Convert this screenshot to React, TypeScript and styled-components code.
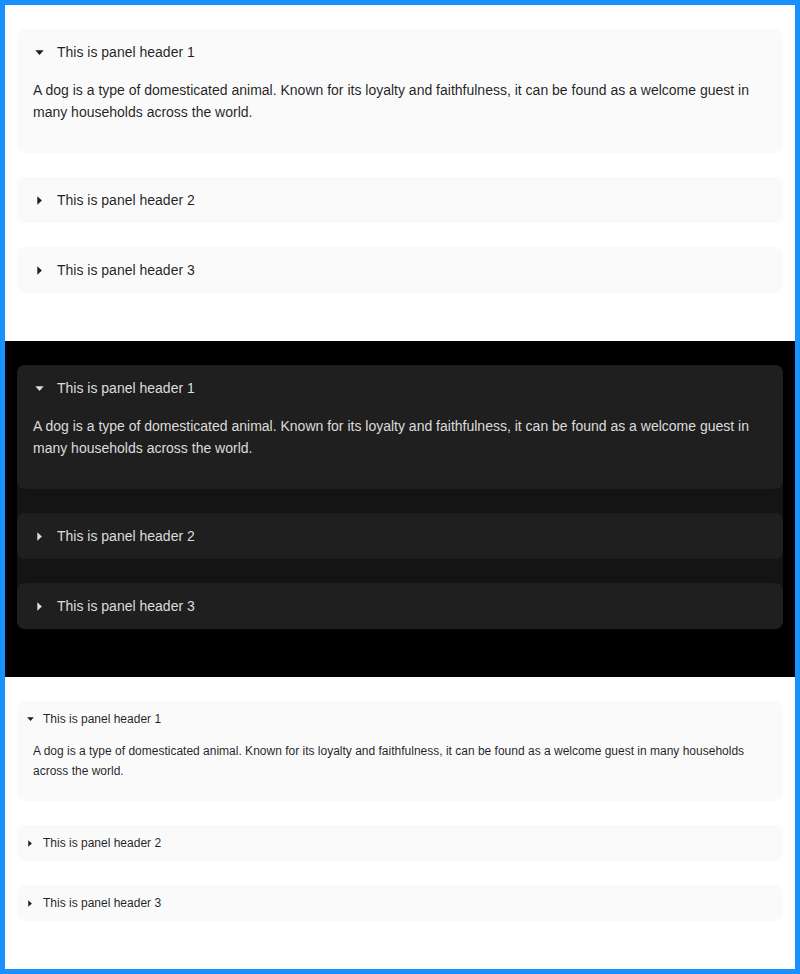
import React, { useState } from "react";
import styled, { createGlobalStyle } from "styled-components";

const Global = createGlobalStyle`
  html, body { margin: 0; padding: 0; background: #fff; }
  body { font-family: "Liberation Sans", Arial, sans-serif; }
  * { box-sizing: border-box; }
`;

type Mode = "light" | "dark";
type Size = "middle" | "small";

const Frame = styled.div`
  border: 5px solid #1890ff;
  min-height: 974px;
  background: #fff;
`;

const Section = styled.div<{ $mode: Mode }>`
  background: ${(p) => (p.$mode === "dark" ? "#000" : "#fff")};
  padding: 24px 12px 48px;
`;

const Collapse = styled.div<{ $mode: Mode }>`
  display: flex;
  flex-direction: column;
  gap: 24px;
  border-radius: 8px;
  background: ${(p) => (p.$mode === "dark" ? "#141414" : "#fff")};
`;

const Panel = styled.div<{ $mode: Mode }>`
  border-radius: 8px;
  background: ${(p) => (p.$mode === "dark" ? "#1f1f1f" : "#fafafa")};
  color: ${(p) => (p.$mode === "dark" ? "rgba(255,255,255,0.85)" : "rgba(0,0,0,0.88)")};
`;

const Header = styled.div<{ $size: Size }>`
  display: flex;
  align-items: center;
  gap: ${(p) => (p.$size === "small" ? "8px" : "12px")};
  padding: ${(p) => (p.$size === "small" ? "8px 8px" : "12px 16px")};
  font-size: ${(p) => (p.$size === "small" ? "12px" : "14px")};
  line-height: ${(p) => (p.$size === "small" ? "20px" : "22px")};
  cursor: pointer;
  user-select: none;
`;

const Arrow = styled.span<{ $size: Size }>`
  display: inline-flex;
  align-items: center;
  justify-content: center;
  width: ${(p) => (p.$size === "small" ? "10px" : "12px")};
  height: 12px;
`;

const Content = styled.div<{ $size: Size }>`
  padding: ${(p) => (p.$size === "small" ? "4px 16px 20px" : "4px 16px 30px")};
  font-size: ${(p) => (p.$size === "small" ? "12px" : "14px")};
  line-height: ${(p) => (p.$size === "small" ? "20px" : "22px")};
`;

const Caret: React.FC<{ open: boolean; size: Size }> = ({ open, size }) => {
  const s = size === "small" ? 7 : 9;
  return open ? (
    <svg width={s} height={Math.round(s * 0.55)} viewBox="0 0 8 4.8">
      <path d="M0 0.3 L8 0.3 L4 4.7 Z" fill="currentColor" />
    </svg>
  ) : (
    <svg width={Math.round(s * 0.55)} height={s} viewBox="0 0 4.8 8">
      <path d="M0.3 0 L0.3 8 L4.7 4 Z" fill="currentColor" />
    </svg>
  );
};

const text =
  "A dog is a type of domesticated animal. Known for its loyalty and faithfulness, it can be found as a welcome guest in many households across the world.";

const Accordion: React.FC<{ mode: Mode; size: Size }> = ({ mode, size }) => {
  const [open, setOpen] = useState<string[]>(["1"]);
  const toggle = (k: string) =>
    setOpen((o) => (o.includes(k) ? o.filter((x) => x !== k) : [...o, k]));
  return (
    <Section $mode={mode}>
      <Collapse $mode={mode}>
        {["1", "2", "3"].map((k) => {
          const isOpen = open.includes(k);
          return (
            <Panel key={k} $mode={mode}>
              <Header $size={size} onClick={() => toggle(k)}>
                <Arrow $size={size}>
                  <Caret open={isOpen} size={size} />
                </Arrow>
                <span>This is panel header {k}</span>
              </Header>
              {isOpen && <Content $size={size}>{text}</Content>}
            </Panel>
          );
        })}
      </Collapse>
    </Section>
  );
};

export default function App() {
  return (
    <>
      <Global />
      <Frame>
        <Accordion mode="light" size="middle" />
        <Accordion mode="dark" size="middle" />
        <Accordion mode="light" size="small" />
      </Frame>
    </>
  );
}
